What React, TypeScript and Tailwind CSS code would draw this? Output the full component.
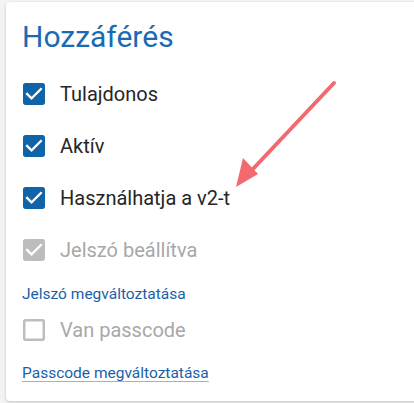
import React from "react";

const CHECKED =
  "M19 3H5c-1.11 0-2 .9-2 2v14c0 1.1.89 2 2 2h14c1.11 0 2-.9 2-2V5c0-1.1-.89-2-2-2zm-9 14l-5-5 1.41-1.41L10 14.17l7.59-7.59L19 8l-9 9z";
const UNCHECKED =
  "M19 5v14H5V5h14m0-2H5c-1.1 0-2 .9-2 2v14c0 1.1.9 2 2 2h14c1.1 0 2-.9 2-2V5c0-1.1-.9-2-2-2z";

function Box({ checked, disabled }: { checked: boolean; disabled?: boolean }) {
  const color = disabled ? "#bdbdbd" : "#0f63a9";
  return (
    <svg width="22" height="22" viewBox="3 3 18 18" className="shrink-0">
      <path d={checked ? CHECKED : UNCHECKED} fill={color} />
    </svg>
  );
}

function Row({ label, checked, disabled }: { label: string; checked: boolean; disabled?: boolean }) {
  return (
    <div className="flex h-[52px] items-center gap-[15px] pl-[1px]">
      <Box checked={checked} disabled={disabled} />
      <span className={disabled ? "text-[20px] text-[#a8a8a8]" : "text-[20px] text-[#262626]"}>{label}</span>
    </div>
  );
}

export default function App() {
  return (
    <div
      className="relative h-[403px] w-[414px] overflow-hidden bg-[#f3f3f3] pl-[6px] pt-[2px]"
      style={{ fontFamily: "Roboto, 'Noto Sans', sans-serif" }}
    >
      <div className="h-[399px] w-[430px] rounded-[4px] bg-white pl-[16px] shadow-[0_1px_3px_rgba(0,0,0,0.2)]">
        <h1 className="pt-[17px] text-[30px] leading-[36px] text-[#1a6bb4]">Hozzáférés</h1>
        <div className="mt-[13px] flex flex-col">
          <Row label="Tulajdonos" checked />
          <Row label="Aktív" checked />
          <Row label="Használhatja a v2-t" checked />
          <Row label="Jelszó beállítva" checked disabled />
        </div>
        <div className="mt-[8px] text-[15.5px] leading-[20px] text-[#1a5fa8]">Jelszó megváltoztatása</div>
        <Row label="Van passcode" checked={false} disabled />
        <div className="mt-[5px]">
          <span className="text-[15.5px] leading-[20px] text-[#1a5fa8] underline decoration-[#8fb6de] underline-offset-[3px]">
            Passcode megváltoztatása
          </span>
        </div>
      </div>
      <svg className="pointer-events-none absolute left-0 top-0" width="414" height="403">
        <line x1="334" y1="83" x2="252" y2="170" stroke="#f26a6f" strokeWidth="4" strokeLinecap="round" />
        <polygon points="236,187 243,158 258,174" fill="#f26a6f" />
      </svg>
    </div>
  );
}
